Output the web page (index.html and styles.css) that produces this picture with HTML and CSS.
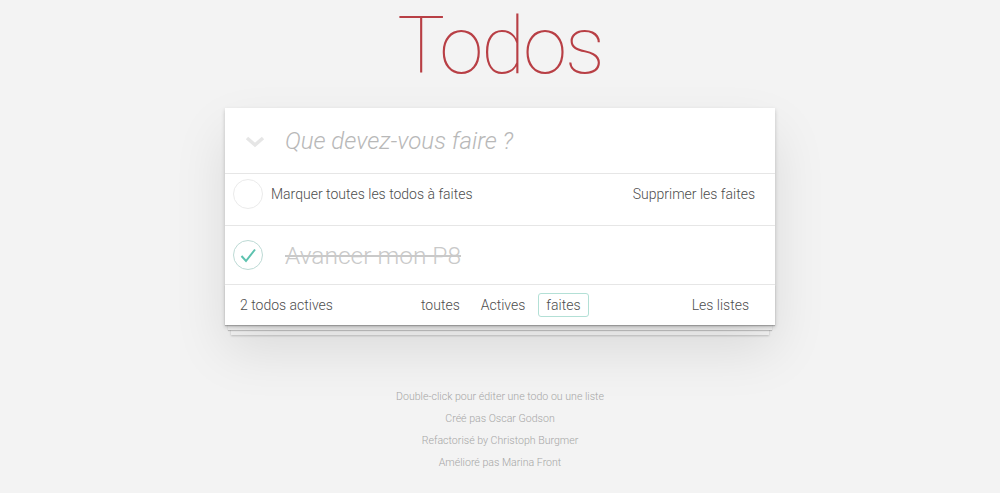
FILE: index.html
```html
<!DOCTYPE html>
<html lang="fr">
<head>
<meta charset="utf-8">
<title>Todos</title>
<link rel="stylesheet" href="styles.css">
</head>
<body>
<h1 class="title">Todos</h1>
<section class="app">
  <header class="new-row">
    <span class="chevron"><svg width="20" height="12" viewBox="0 0 20 12"><path d="M2 2 L10 9 L18 2" fill="none" stroke="#e6e6e6" stroke-width="3.5"/></svg></span>
    <span class="placeholder">Que devez-vous faire ?</span>
  </header>
  <div class="toggle-row">
    <span class="circle"></span>
    <span class="toggle-label">Marquer toutes les todos à faites</span>
    <span class="spacer"></span>
    <span class="clear">Supprimer les faites</span>
  </div>
  <ul class="list">
    <li class="item">
      <span class="circle done"><svg width="30" height="30" viewBox="0 0 30 30"><path d="M8.5 16 L13 21 L22 9.5" fill="none" stroke="#5dc2af" stroke-width="2"/></svg></span>
      <span class="item-label">Avancer mon P8</span>
    </li>
  </ul>
  <footer class="foot">
    <span class="count">2 todos actives</span>
    <nav class="filters">
      <a class="filter">toutes</a>
      <a class="filter">Actives</a>
      <a class="filter selected">faites</a>
    </nav>
    <a class="lists">Les listes</a>
  </footer>
</section>
<footer class="info">
  <p>Double-click pour éditer une todo ou une liste</p>
  <p>Créé pas Oscar Godson</p>
  <p>Refactorisé by Christoph Burgmer</p>
  <p>Amélioré pas Marina Front</p>
</footer>
</body>
</html>
```
FILE: styles.css
```css
* { box-sizing: border-box; }
html, body { margin: 0; padding: 0; }
body {
  background: #f3f3f3;
  font-family: Roboto, "Helvetica Neue", "Liberation Sans", sans-serif;
  font-weight: 300;
  color: #4d4d4d;
  height: 493px;
  overflow: hidden;
}
.title {
  margin: 0;
  padding-top: 1px;
  height: 108px;
  text-align: center;
  font-size: 80px;
  letter-spacing: -2px;
  font-weight: 100;
  line-height: 90px;
  color: #b83f45;
}
.app {
  width: 550px;
  margin: 0 auto;
  background: #fff;
  position: relative;
  box-shadow: 0 2px 4px rgba(0,0,0,0.2), 0 25px 50px 0 rgba(0,0,0,0.1);
}
.new-row {
  height: 66px;
  display: flex;
  align-items: center;
  border-bottom: 1px solid #e6e6e6;
}
.chevron {
  width: 60px;
  display: flex;
  justify-content: center;
  padding-top: 2px;
}
.placeholder {
  font-size: 24px;
  font-style: italic;
  color: #b8b8b8;
}
.toggle-row {
  height: 52px;
  display: flex;
  align-items: flex-start;
  padding: 5px 20px 0 8px;
  border-bottom: 1px solid #e6e6e6;
  font-size: 14px;
  line-height: 30px;
}
.circle {
  width: 30px;
  height: 30px;
  border-radius: 50%;
  border: 1px solid #ebebeb;
  flex: none;
  display: block;
  position: relative;
}
.circle svg { position: absolute; left: -1px; top: -1px; }
.circle.done { border-color: #bddad5; }
.toggle-label { margin-left: 8px; color: #4d4d4d; }
.spacer { flex: 1; }
.clear { color: #4d4d4d; }
.list { list-style: none; margin: 0; padding: 0; }
.item {
  height: 59px;
  display: flex;
  align-items: center;
  padding-left: 8px;
  border-bottom: 1px solid #e6e6e6;
}
.item-label {
  margin-left: 22px;
  font-size: 24.5px;
  color: #c9c9c9;
  text-decoration: line-through;
}
.foot {
  height: 40px;
  display: flex;
  align-items: center;
  padding: 0 26px 0 15px;
  font-size: 14px;
  color: #4d4d4d;
  position: relative;
}
.foot::before {
  content: "";
  position: absolute;
  left: 0; right: 0; bottom: 0;
  height: 40px;
  z-index: -1;
  box-shadow: 0 1px 1px rgba(0,0,0,0.2), 0 8px 0 -3px #f6f6f6, 0 9px 1px -3px rgba(0,0,0,0.2), 0 16px 0 -6px #f6f6f6, 0 17px 2px -6px rgba(0,0,0,0.2);
}
.count { width: 173px; }
.filters { display: flex; gap: 5px; flex: 1; }
.filter {
  padding: 3px 7px;
  border: 1px solid transparent;
  border-radius: 3px;
  color: #4d4d4d;
}
.filter.selected { border-color: #b3e0d6; }
.lists { color: #4d4d4d; }
.info {
  margin-top: 61px;
  text-align: center;
  font-size: 10.6px;
  color: #a6a6a6;
}
.info p { margin: 0; line-height: 22px; }
```
